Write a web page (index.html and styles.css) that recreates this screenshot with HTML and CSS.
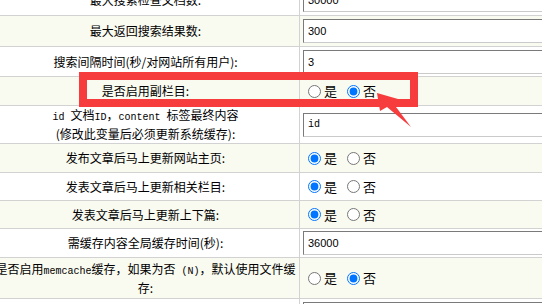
FILE: index.html
```html
<!DOCTYPE html>
<html lang="zh-CN">
<head>
<meta charset="utf-8">
<title>系统参数</title>
<link rel="stylesheet" href="styles.css">
</head>
<body>
<div class="form">
  <div class="row h31">
    <div class="lbl">最大搜索检查文档数:</div>
    <div class="val"><input class="txt" type="text" value="30000"></div>
  </div>
  <div class="row h31 alt">
    <div class="lbl">最大返回搜索结果数:</div>
    <div class="val"><input class="txt" type="text" value="300"></div>
  </div>
  <div class="row h30">
    <div class="lbl">搜索间隔时间(秒/对网站所有用户):</div>
    <div class="val"><input class="txt" type="text" value="3"></div>
  </div>
  <div class="row h29 alt">
    <div class="lbl">是否启用副栏目:</div>
    <div class="val">
      <label class="opt"><input type="radio" name="r1">是</label>
      <label class="opt"><input type="radio" name="r1" checked>否</label>
    </div>
  </div>
  <div class="row h38">
    <div class="lbl"><span><span class="en">id </span>文档<span class="en">ID</span>，<span class="en">content </span>标签最终内容<br>(修改此变量后必须更新系统缓存):</span></div>
    <div class="val"><input class="txt mono" type="text" value="id"></div>
  </div>
  <div class="row h29 alt">
    <div class="lbl">发布文章后马上更新网站主页:</div>
    <div class="val">
      <label class="opt"><input type="radio" name="r2" checked>是</label>
      <label class="opt"><input type="radio" name="r2">否</label>
    </div>
  </div>
  <div class="row h28">
    <div class="lbl">发表文章后马上更新相关栏目:</div>
    <div class="val">
      <label class="opt"><input type="radio" name="r3" checked>是</label>
      <label class="opt"><input type="radio" name="r3">否</label>
    </div>
  </div>
  <div class="row h28 alt">
    <div class="lbl">发表文章后马上更新上下篇:</div>
    <div class="val">
      <label class="opt"><input type="radio" name="r4" checked>是</label>
      <label class="opt"><input type="radio" name="r4">否</label>
    </div>
  </div>
  <div class="row h29">
    <div class="lbl">需缓存内容全局缓存时间(秒):</div>
    <div class="val"><input class="txt" type="text" value="36000"></div>
  </div>
  <div class="row h41 alt">
    <div class="lbl"><span>是否启用<span class="en">memcache</span>缓存，如果为否<span class="en"> (N)</span>，默认使用文件缓存:</span></div>
    <div class="val">
      <label class="opt"><input type="radio" name="r5">是</label>
      <label class="opt"><input type="radio" name="r5" checked>否</label>
    </div>
  </div>
  <div class="row h31">
    <div class="lbl"></div>
    <div class="val"><input class="txt" type="text" value=""></div>
  </div>
</div>
<svg class="mark" width="542" height="304" viewBox="0 0 542 304">
  <rect x="83" y="76" width="331" height="27" fill="none" stroke="#f63c3c" stroke-width="8"/>
  <polygon points="377,93 398,99 393,103 411,127 387,107 380,111" fill="#f63c3c"/>
</svg>
</body>
</html>
```
FILE: styles.css
```css
html, body {
  margin: 0;
  padding: 0;
}
body {
  width: 542px;
  height: 304px;
  overflow: hidden;
  position: relative;
  background: #fff;
  font-family: "Noto Sans CJK SC", sans-serif;
  color: #000;
}
.form {
  margin: -15px 0 0 -8px;
  width: 720px;
}
.row {
  display: grid;
  grid-template-columns: 308px 1fr;
  border-bottom: 1px solid #d2d2d2;
  box-sizing: border-box;
  background: #fff;
}
.row.alt {
  background: #f9faf0;
}
.h28 { height: 28px; }
.h29 { height: 29px; }
.h30 { height: 30px; }
.h31 { height: 31px; }
.h38 { height: 38px; }
.h41 { height: 41px; }
.lbl {
  border-right: 1px solid #d2d2d2;
  display: flex;
  align-items: center;
  justify-content: center;
  text-align: center;
  padding: 0 2px;
  font-size: 12px;
  line-height: 16px;
}
.en {
  font-family: "Liberation Mono", monospace;
  font-size: 10px;
  white-space: pre;
}
.val {
  display: flex;
  align-items: center;
  padding: 0 3px;
}
.txt {
  width: 420px;
  height: 24px;
  box-sizing: border-box;
  margin: 0;
  padding: 0 4px;
  border: 1px solid;
  border-color: #7a7a7a #cacaca #cacaca #7a7a7a;
  background: #fff;
  font-family: "Liberation Sans", sans-serif;
  font-size: 11px;
  color: #000;
  outline: none;
}
.txt.mono {
  font-family: "Liberation Mono", monospace;
  font-size: 10px;
}
.opt {
  display: inline-flex;
  align-items: center;
  font-size: 13px;
  line-height: 16px;
}
.opt input {
  margin: 0 3px 0 5px;
  width: 13px;
  height: 13px;
}
.opt + .opt {
  margin-left: 5px;
}
.mark {
  position: absolute;
  left: 0;
  top: 0;
  pointer-events: none;
}
```
